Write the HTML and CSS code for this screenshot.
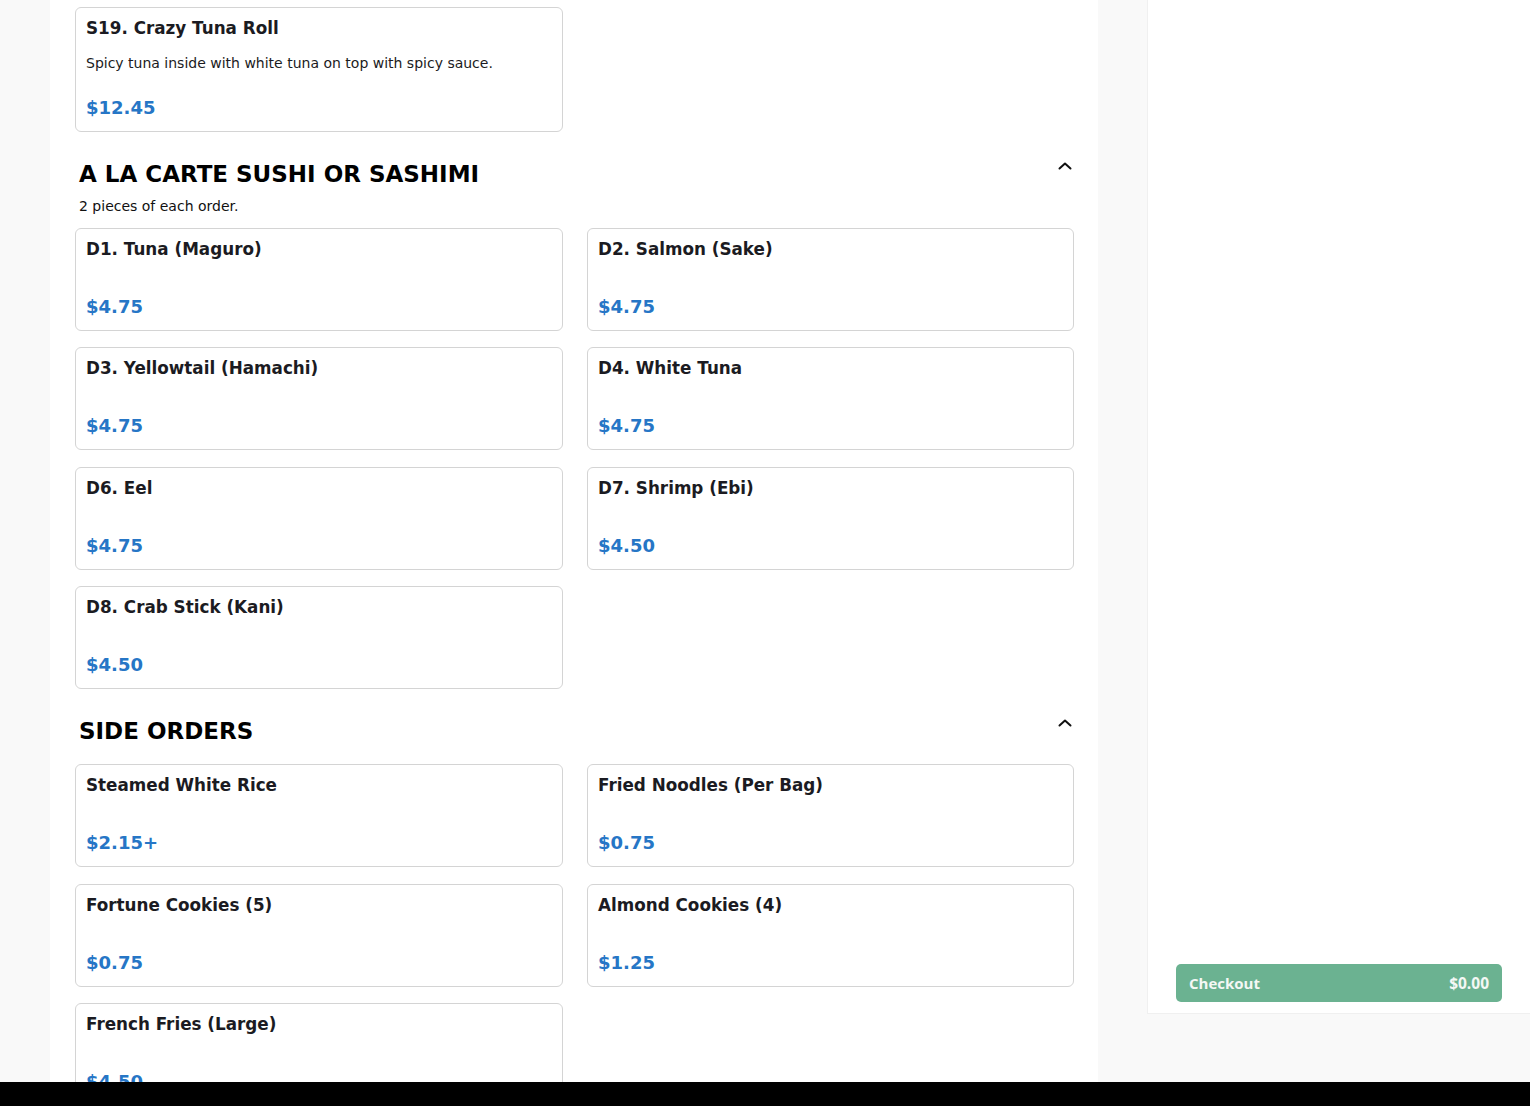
FILE: index.html
```html
<!DOCTYPE html>
<html>
<head>
<meta charset="utf-8">
<link rel="stylesheet" href="styles.css">
</head>
<body>
<div class="viewport">
  <main class="menu">
    <div class="grid">
      <div class="card">
        <h3 class="title">S19. Crazy Tuna Roll</h3>
        <p class="desc">Spicy tuna inside with white tuna on top with spicy sauce.</p>
        <div class="price">$12.45</div>
      </div>
    </div>

    <section class="section">
      <header class="head">
        <div>
          <h2 class="heading">A LA CARTE SUSHI OR SASHIMI</h2>
          <p class="sub">2 pieces of each order.</p>
        </div>
        <svg class="chev" width="16" height="16" viewBox="0 0 16 16"><path d="M2.5 10.5 L8 5.5 L13.5 10.5" fill="none" stroke="#111" stroke-width="2" stroke-linecap="round" stroke-linejoin="round"/></svg>
      </header>
      <div class="grid">
        <div class="card"><h3 class="title">D1. Tuna (Maguro)</h3><div class="price">$4.75</div></div>
        <div class="card"><h3 class="title">D2. Salmon (Sake)</h3><div class="price">$4.75</div></div>
        <div class="card"><h3 class="title">D3. Yellowtail (Hamachi)</h3><div class="price">$4.75</div></div>
        <div class="card"><h3 class="title">D4. White Tuna</h3><div class="price">$4.75</div></div>
        <div class="card"><h3 class="title">D6. Eel</h3><div class="price">$4.75</div></div>
        <div class="card"><h3 class="title">D7. Shrimp (Ebi)</h3><div class="price">$4.50</div></div>
        <div class="card"><h3 class="title">D8. Crab Stick (Kani)</h3><div class="price">$4.50</div></div>
      </div>
    </section>

    <section class="section">
      <header class="head">
        <div>
          <h2 class="heading">SIDE ORDERS</h2>
        </div>
        <svg class="chev" width="16" height="16" viewBox="0 0 16 16"><path d="M2.5 10.5 L8 5.5 L13.5 10.5" fill="none" stroke="#111" stroke-width="2" stroke-linecap="round" stroke-linejoin="round"/></svg>
      </header>
      <div class="grid">
        <div class="card"><h3 class="title">Steamed White Rice</h3><div class="price">$2.15+</div></div>
        <div class="card"><h3 class="title">Fried Noodles (Per Bag)</h3><div class="price">$0.75</div></div>
        <div class="card"><h3 class="title">Fortune Cookies (5)</h3><div class="price">$0.75</div></div>
        <div class="card"><h3 class="title">Almond Cookies (4)</h3><div class="price">$1.25</div></div>
        <div class="card"><h3 class="title">French Fries (Large)</h3><div class="price">$4.50</div></div>
      </div>
    </section>
  </main>

  <aside class="sidebar">
    <div class="cart">
      <button class="checkout"><span>Checkout</span><span>$0.00</span></button>
    </div>
  </aside>
</div>
<div class="blackbar"></div>
</body>
</html>
```

FILE: styles.css
```css
* { box-sizing: border-box; }

html, body {
  margin: 0;
  padding: 0;
  background: #000;
}

body {
  font-family: "DejaVu Sans", "Liberation Sans", sans-serif;
  color: #1b1b22;
  height: 1106px;
  overflow: hidden;
  display: flex;
  flex-direction: column;
}

.viewport {
  height: 1082px;
  overflow: hidden;
  background: #f9f9f9;
  display: flex;
  align-items: flex-start;
  padding-left: 50px;
  gap: 49px;
}

.blackbar {
  height: 24px;
  background: #000;
}

.menu {
  width: 1048px;
  min-height: 1082px;
  background: #fff;
  padding: 7px 24px 0 25px;
}

.grid {
  display: grid;
  grid-template-columns: 488px 487px;
  column-gap: 24px;
  row-gap: 16.4px;
}

.card {
  border: 1px solid #d4d4d4;
  border-radius: 6px;
  padding: 9px 10px 12px 10px;
  background: #fff;
  min-height: 103px;
}

.title {
  margin: 0;
  font-size: 16.8px;
  line-height: 22px;
  font-weight: bold;
  color: #1b1b22;
}

.desc {
  margin: 14px 0 0 0;
  font-size: 14px;
  line-height: 20px;
  color: #1b1b22;
}

.price {
  margin-top: 36px;
  font-size: 18px;
  line-height: 22px;
  font-weight: bold;
  color: #2676c6;
}

.desc + .price {
  margin-top: 24px;
}

.section {
  margin-top: 26px;
}

.head {
  display: flex;
  justify-content: space-between;
  align-items: flex-start;
  padding-left: 4px;
  padding-right: 1px;
  margin-bottom: 17px;
}

.heading {
  margin: 0;
  font-size: 23px;
  line-height: 32px;
  font-weight: bold;
  color: #000;
}

.sub {
  margin: 6px 0 -5px 0;
  font-size: 14px;
  line-height: 20px;
  color: #111;
}

.chev {
  margin-top: 0;
  display: block;
}

.sidebar {
  width: 383px;
  height: 1014px;
  background: #fff;
  border-left: 1px solid #f0f0f0;
  border-bottom: 1px solid #f0f0f0;
  display: flex;
  flex-direction: column;
  justify-content: flex-end;
  padding: 0 28px 11px 28px;
}

.checkout {
  width: 100%;
  height: 38px;
  border: none;
  border-radius: 5px;
  background: #6bb291;
  color: #f4f8f5;
  font-family: "Open Sans", "Lato", sans-serif;
  font-weight: bold;
  font-size: 15px;
  display: flex;
  justify-content: space-between;
  align-items: center;
  padding: 0 13px 0 13px;
}

.checkout span:last-child {
  font-size: 15.5px;
}
```
